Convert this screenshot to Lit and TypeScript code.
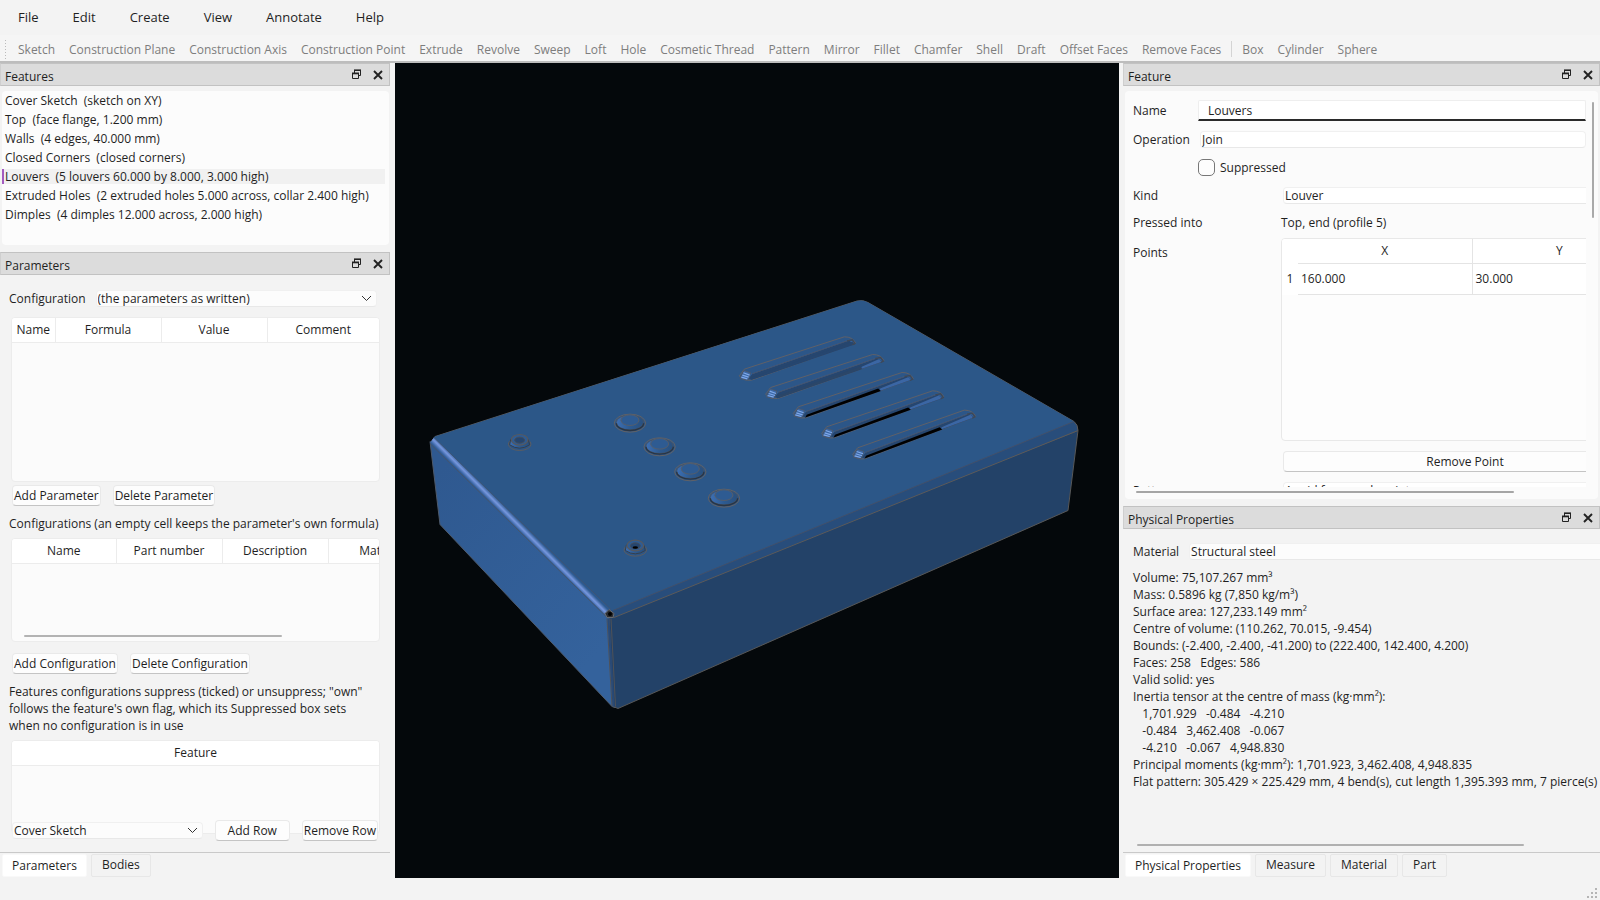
import { LitElement, html, svg, css, nothing } from "lit";
import { customElement, property } from "lit/decorators.js";

const MENUS = ["File", "Edit", "Create", "View", "Annotate", "Help"];

const TOOLS = [
  "Sketch", "Construction Plane", "Construction Axis", "Construction Point", "Extrude", "Revolve", "Sweep",
  "Loft", "Hole", "Cosmetic Thread", "Pattern", "Mirror", "Fillet", "Chamfer", "Shell", "Draft",
  "Offset Faces", "Remove Faces",
];
const SOLIDS = ["Box", "Cylinder", "Sphere"];

const FEATURES = [
  "Cover Sketch  (sketch on XY)",
  "Top  (face flange, 1.200 mm)",
  "Walls  (4 edges, 40.000 mm)",
  "Closed Corners  (closed corners)",
  "Louvers  (5 louvers 60.000 by 8.000, 3.000 high)",
  "Extruded Holes  (2 extruded holes 5.000 across, collar 2.400 high)",
  "Dimples  (4 dimples 12.000 across, 2.000 high)",
];

const PROPERTIES = [
  "Volume: 75,107.267 mm³",
  "Mass: 0.5896 kg (7,850 kg/m³)",
  "Surface area: 127,233.149 mm²",
  "Centre of volume: (110.262, 70.015, -9.454)",
  "Bounds: (-2.400, -2.400, -41.200) to (222.400, 142.400, 4.200)",
  "Faces: 258   Edges: 586",
  "Valid solid: yes",
  "Inertia tensor at the centre of mass (kg·mm²):",
  "   1,701.929   -0.484   -4.210",
  "   -0.484   3,462.408   -0.067",
  "   -4.210   -0.067   4,948.830",
  "Principal moments (kg·mm²): 1,701.923, 3,462.408, 4,948.835",
  "Flat pattern: 305.429 × 225.429 mm, 4 bend(s), cut length 1,395.393 mm, 7 pierce(s)",
].join("\n");

const controls = css`
  * {
    box-sizing: border-box;
  }
  button,
  input,
  select {
    font: inherit;
    color: inherit;
    margin: 0;
    border-radius: 4px;
  }
  button {
    height: 21px;
    padding: 0 1px;
    line-height: 17px;
    background: #fdfdfd;
    border: 1px solid #e9e9e9;
    border-bottom-color: #c4c4c4;
    white-space: nowrap;
  }
  select {
    appearance: none;
    height: 17px;
    padding: 0 1px;
    line-height: 15px;
    background: #fcfcfc;
    border: 1px solid #f0f0f0;
    border-bottom-color: #e8e8e8;
    min-width: 0;
  }
  .tabs {
    display: flex;
    gap: 4px;
    height: 26px;
    padding: 1px 3px 0 2px;
    border-top: 1px solid #c9c9c9;
    flex: none;
  }
  .tabs button {
    height: 23px;
    padding: 0 10px 2px;
    border: 1px solid #e7e7e7;
    border-radius: 2px;
    background: #f3f3f3;
  }
  .tabs button.on {
    padding: 0 9px;
    background: #fff;
    border-color: #f9f9f9;
  }
`;

@customElement("dock-panel")
export class DockPanel extends LitElement {
  @property() heading = "";

  static styles = css`
    :host {
      display: flex;
      flex-direction: column;
      min-height: 0;
      min-width: 0;
    }
    header {
      box-sizing: border-box;
      display: flex;
      align-items: center;
      flex: none;
      height: 23px;
      padding: 2px 0 0 4px;
      background: #dcdcdc;
      border: 1px solid #c2c2c2;
      border-left-color: #cfcfcf;
      line-height: 17px;
    }
    h2 {
      flex: 1;
      margin: 0;
      padding-top: 2px;
      font: inherit;
    }
    button {
      width: 22px;
      height: 20px;
      padding: 0 0 2px;
      border: 0;
      background: none;
      color: #222;
    }
    svg {
      display: block;
      margin: auto;
    }
  `;

  render() {
    return html`
      <header>
        <h2>${this.heading}</h2>
        <button aria-label="Float ${this.heading}">
          <svg width="11" height="11" viewBox="0 0 11 11" fill="none" stroke="currentColor">
            <path d="M3.5 4V1.5H9.5V6.5H8" /><path d="M3 1.2H10" stroke-width="1.6" />
            <path d="M1.5 4.5H7.5V9.5H1.5Z" /><path d="M1 4.4H8" stroke-width="1.8" />
          </svg>
        </button>
        <button aria-label="Close ${this.heading}">
          <svg width="10" height="10" viewBox="0 0 10 10" stroke="currentColor" stroke-width="1.9">
            <path d="M1 1L9 9M9 1L1 9" />
          </svg>
        </button>
      </header>
      <slot></slot>
    `;
  }
}

@customElement("model-view")
export class ModelView extends LitElement {
  static styles = css`
    :host {
      display: block;
      background: #04080b;
      min-width: 0;
      min-height: 0;
      overflow: hidden;
    }
    svg {
      display: block;
      width: 100%;
      height: 100%;
    }
  `;

  /** A louver between its left tip (lx, ly) and right tip (rx, ry); open is how far the dark slot runs. */
  private louver(lx: number, ly: number, rx: number, ry: number, open: number, slot: string) {
    const at = (t: number, dx: number, dy: number) =>
      `${lx + 36 + (rx - lx - 42) * t + dx},${ly + 12 + (ry - ly - 10) * t + dy}`;
    return svg`
      <path d="M${lx} ${ly + 2}L${lx + 15} ${ly - 18}L${rx - 34} ${ry - 20}Q${rx - 8} ${ry - 20} ${rx} ${ry - 1}L${lx + 36} ${ly + 15}Q${lx + 10} ${ly + 18} ${lx} ${ly + 2}Z"
        fill="#2c5688" stroke="#5f6067" stroke-width="3" />
      <path d="M${lx + 16} ${ly - 13}L${lx + 36} ${ly - 5}L${rx - 20} ${ry - 12}L${rx - 6} ${ry - 3}L${at(0, 0, 0)}L${lx + 6} ${ly + 4}Z" fill="#31609b" />
      <path d="M${at(0, -8, -2)}L${at(0, 2, -15)}L${at(1, -14, -11)}L${at(1, 2, 0)}L${at(0, 0, 2)}Z" fill="#26466f" />
      <path d="M${at(open, 0, 0)}L${at(open, 2, -7)}L${at(1, -10, -8)}L${at(1, 0, 0)}Z" fill="#3b66a4" />
      <path d="M${at(0, 0, 2)}L${at(0, 4, -6)}L${at(open, -4, -7)}L${at(open, 4, 0)}Z" fill="${slot}" />
      <path d="M${at(0, 2, -16)}L${at(1, -14, -12)}" fill="none" stroke="#46536a" stroke-width="3" />
      <path d="M${rx - 26} ${ry - 8}L${rx - 10} ${ry - 11}L${rx - 2} ${ry}L${rx - 10} ${ry + 4}" fill="none" stroke="#3d4858" stroke-width="4" />
      <path d="M${lx + 14} ${ly - 14}l20 7l-9 22l-23-5Z" fill="#3b68a6" stroke="#4d5768" stroke-width="2.5" />
      <path d="M${lx + 12} ${ly - 7}l19 7M${lx + 9} ${ly}l19 6M${lx + 6} ${ly + 6}l18 5" stroke="#80a9ea" stroke-width="3.5" />
    `;
  }

  private dimple(x: number, y: number) {
    return svg`
      <ellipse cx="${x}" cy="${y + 2}" rx="47" ry="27" fill="#2c5688" stroke="#616165" stroke-width="3" />
      <ellipse cx="${x}" cy="${y}" rx="41" ry="22" fill="url(#dome)" stroke="#465365" stroke-width="2.5" />
      <path d="M${x - 41} ${y + 2}A41 22 0 0 0 ${x + 41} ${y + 2}" fill="none" stroke="#2b3542" stroke-width="4" />
      <ellipse cx="${x}" cy="${y - 7}" rx="27" ry="16" fill="#2e5b92" stroke="#545d6b" stroke-width="3" />
    `;
  }

  private collar(x: number, y: number, through: boolean) {
    return svg`
      <ellipse cx="${x}" cy="${y + 6}" rx="34" ry="19" fill="#2c5688" stroke="#5b5c60" stroke-width="3" />
      <path d="M${x - 27} ${y - 8}L${x - 30} ${y + 8}Q${x} ${y + 28} ${x + 30} ${y + 8}L${x + 26} ${y - 8}Z" fill="url(#dome)" stroke="#343f4d" stroke-width="3" />
      <ellipse cx="${x}" cy="${y - 7}" rx="25" ry="16" fill="#2f5c93" stroke="#56595f" stroke-width="3.5" />
      <ellipse cx="${x}" cy="${y - 6}" rx="15" ry="9" fill="#26466f" stroke="#434c5a" stroke-width="3" />
      ${through ? svg`<ellipse cx="${x}" cy="${y - 1}" rx="8" ry="4" fill="#000" />` : nothing}
    `;
  }

  render() {
    return html`
      <svg viewBox="395 63 724 814" role="img" aria-label="Sheet metal cover">
        <defs>
          <linearGradient id="side" x1="430" y1="480" x2="610" y2="640" gradientUnits="userSpaceOnUse">
            <stop offset="0" stop-color="#2f5990" /><stop offset="1" stop-color="#34629c" />
          </linearGradient>
          <linearGradient id="bend" x1="518" y1="529" x2="523" y2="524" gradientUnits="userSpaceOnUse">
            <stop offset="0" stop-color="#335f9b" /><stop offset="0.5" stop-color="#7898e0" />
            <stop offset="1" stop-color="#2d5a90" />
          </linearGradient>
          <linearGradient id="dome">
            <stop offset="0" stop-color="#3d70b6" /><stop offset="0.5" stop-color="#2d5a90" />
            <stop offset="1" stop-color="#28507f" />
          </linearGradient>
        </defs>
        <g stroke-linejoin="round">
          <path d="M430 441L440 524L612 706L615 707V620L607 614Z" fill="url(#side)" stroke="#4e5a6b" />
          <path d="M612 614L1078 430L1068 510L618 708L613 706L609 617Z" fill="#234268" stroke="#575757" />
          <path d="M432 440L435 436L857 300.500Q863 299 868 302L1074 421Q1078 424 1078 430L614 617L606 613Z" fill="#284d7b" stroke="#5c5a59" />
          <path d="M433 438L435 436L857 300.500Q863 299 868 302L1074 421L613 610L609 610Z" fill="#2c5788" />
          <path d="M613 610L1074 421" stroke="#42506a" fill="none" />
          <path d="M430 442L434 437L611 609L606 615Z" fill="url(#bend)" />
          <path d="M434 437L611 609" stroke="#3e5474" />
          <path d="M430 443L606 616" stroke="#46566e" />
          <path d="M607 618L612 706M611 618L615.500 706" stroke="#505257" fill="none" />
          <path d="M608.500 618L613.500 706" stroke="#2a4a76" stroke-width="2" />
          <path d="M605 613L609 609L614 613L613 617H607Z" fill="#2b2d31" stroke="#666a70" />
          <circle cx="610" cy="613.500" r="2" fill="#000" />
        </g>
        <g transform="translate(720 290) scale(0.3333)">
          ${this.louver(58, 254, 407, 159, 1, "#26466f")}
          ${this.louver(137, 309, 492, 212, 0.8, "#2b4668")}
          ${this.louver(220, 367, 580, 266, 0.7, "#000")}
          ${this.louver(305, 427, 672, 321, 0.7, "#000")}
          ${this.louver(398, 490, 767, 379, 0.7, "#000")}
        </g>
        <g transform="translate(420 390) scale(0.3333)">
          ${this.dimple(630, 96)} ${this.dimple(719, 167)} ${this.dimple(811, 242)} ${this.dimple(912, 321)}
          ${this.collar(299, 155, false)} ${this.collar(646, 472, true)}
        </g>
      </svg>
    `;
  }
}

@customElement("parameters-pane")
export class ParametersPane extends LitElement {
  static styles = [
    controls,
    css`
      :host {
        display: flex;
        flex-direction: column;
        flex: 1;
        min-height: 0;
        line-height: 17px;
      }
      .body {
        display: flex;
        flex-direction: column;
        flex: 1;
        min-height: 0;
        padding: 15px 10px 11px 9px;
      }
      .config {
        display: flex;
        gap: 10px;
        align-items: center;
        padding-right: 3px;
        margin-bottom: 10px;
      }
      .pick {
        display: flex;
        position: relative;
        flex: 1;
      }
      .pick select {
        flex: 1;
      }
      .pick svg {
        position: absolute;
        right: 5px;
        top: 5px;
        pointer-events: none;
      }
      .grid {
        margin-left: 2px;
        border: 1px solid #ececec;
        border-radius: 4px;
        background: #fbfbfb;
        overflow: hidden;
        flex: none;
        display: flex;
        flex-direction: column;
      }
      .grid.params {
        flex: 1;
      }
      .grid.configs {
        height: 104px;
        margin-top: 6px;
      }
      .grid.flags {
        height: 94px;
        margin-top: 6px;
      }
      table {
        border-collapse: collapse;
        table-layout: fixed;
        width: 100%;
        background: #fff;
      }
      .configs table {
        width: 424px;
      }
      th {
        font-weight: normal;
        padding: 0;
        height: 24px;
        border-right: 1px solid #ececec;
        border-bottom: 1px solid #ececec;
      }
      th:last-child {
        border-right: 0;
      }
      .name {
        width: 43px;
      }
      .first {
        width: 104px;
      }
      .mid {
        width: 106px;
      }
      .bar {
        width: 258px;
        height: 2px;
        margin: auto 0 4px 12px;
        border-radius: 1px;
        background: #b3b3b3;
      }
      .buttons {
        display: flex;
        gap: 12px;
        padding-left: 3px;
        margin: 3px 0 9px;
      }
      .buttons.low {
        margin-top: 11px;
      }
      p {
        margin: 0;
        white-space: nowrap;
      }
      p.wrap {
        white-space: normal;
      }
      .rows {
        display: flex;
        gap: 12px;
        align-items: center;
        padding: 0 2px 0 3px;
        margin-top: -14px;
        position: relative;
      }
      .rows .add {
        width: 75px;
      }
    `,
  ];

  private chevron() {
    return html`<svg width="11" height="7" viewBox="0 0 11 7" fill="none" stroke="#333"><path d="M1 1L5.500 5.500L10 1" /></svg>`;
  }

  render() {
    return html`
      <div class="body">
        <div class="config">
          <label for="config">Configuration</label>
          <span class="pick">
            <select id="config"><option>(the parameters as written)</option></select>${this.chevron()}
          </span>
        </div>
        <div class="grid params">
          <table>
            <tr><th class="name">Name</th><th class="mid">Formula</th><th class="mid">Value</th><th>Comment</th></tr>
          </table>
        </div>
        <div class="buttons"><button>Add Parameter</button><button>Delete Parameter</button></div>
        <p>Configurations (an empty cell keeps the parameter's own formula)</p>
        <div class="grid configs">
          <table>
            <tr><th class="first">Name</th><th class="mid">Part number</th><th class="mid">Description</th><th>Material</th></tr>
          </table>
          <div class="bar"></div>
        </div>
        <div class="buttons low"><button>Add Configuration</button><button>Delete Configuration</button></div>
        <p class="wrap">
          Features configurations suppress (ticked) or unsuppress; "own" follows the feature's own flag, which its
          Suppressed box sets when no configuration is in use
        </p>
        <div class="grid flags">
          <table><tr><th>Feature</th></tr></table>
        </div>
        <div class="rows">
          <span class="pick">
            <select aria-label="Feature to add"><option>Cover Sketch</option></select>${this.chevron()}
          </span>
          <button class="add">Add Row</button><button>Remove Row</button>
        </div>
      </div>
      <nav class="tabs"><button class="on">Parameters</button><button>Bodies</button></nav>
    `;
  }
}

@customElement("feature-pane")
export class FeaturePane extends LitElement {
  static styles = [
    controls,
    css`
      :host {
        display: flex;
        flex: 1;
        min-height: 0;
        line-height: 17px;
        padding: 5px 2px 7px;
      }
      .frame {
        flex: 1;
        min-width: 0;
        display: grid;
        grid-template-columns: minmax(0, 1fr) 12px;
        grid-template-rows: minmax(0, 1fr) 12px;
        padding: 9px 0 0 8px;
        background: #fbfbfb;
        border-radius: 4px;
      }
      form {
        overflow: hidden;
        display: flex;
        flex-direction: column;
        gap: 10px;
      }
      .row {
        display: grid;
        grid-template-columns: 56px 1fr;
        column-gap: 9px;
        align-items: center;
        flex: none;
      }
      .row.wide {
        grid-template-columns: 140px 366px;
        column-gap: 8px;
      }
      .group {
        display: flex;
        flex-direction: column;
        gap: 7px;
        flex: none;
      }
      .name {
        height: 21px;
        width: 100%;
        padding: 0 9px;
        border: 1px solid #eee;
        border-bottom: 2px solid #2a2a2a;
        border-radius: 2px 2px 0 0;
        background: #fff;
        outline: 0;
      }
      select {
        background: #fff;
        margin-left: 2px;
      }
      .check {
        grid-column: 2;
        display: flex;
        gap: 5px;
        align-items: center;
        height: 19px;
      }
      .check input {
        appearance: none;
        width: 17px;
        height: 17px;
        border: 1px solid #777;
        border-radius: 5px;
        background: #fdfdfd;
      }
      .top {
        align-self: start;
        padding-top: 6px;
      }
      .points {
        height: 203px;
        border: 1px solid #e8e8e8;
        border-radius: 4px;
        background: #fdfdfd;
        overflow: hidden;
      }
      table {
        border-collapse: collapse;
        table-layout: fixed;
        width: 100%;
        background: #fff;
      }
      th,
      td {
        padding: 0 3px;
        font-weight: normal;
        border-bottom: 1px solid #e4e4e4;
      }
      tr > :nth-child(2) {
        border-right: 1px solid #e4e4e4;
      }
      tr > :first-child {
        border-bottom: 0;
        width: 16px;
      }
      thead th {
        height: 24px;
      }
      tbody tr > * {
        height: 31px;
      }
      .col {
        width: 174px;
      }
      .second {
        grid-column: 2;
        margin-left: 2px;
      }
      .v {
        width: 2px;
        height: 116px;
        margin: 2px 0 0 6px;
        border-radius: 1px;
        background: #a9a9a9;
      }
      .h {
        width: 378px;
        height: 2px;
        margin: 4px 0 0 3px;
        border-radius: 1px;
        background: #a5a5a5;
      }
    `,
  ];

  render() {
    return html`
      <div class="frame">
        <form>
          <div class="row"><label for="name">Name</label><input id="name" class="name" value="Louvers" /></div>
          <div class="row">
            <label for="op">Operation</label><select id="op"><option>Join</option></select>
          </div>
          <div class="row">
            <label class="check"><input type="checkbox" />Suppressed</label>
          </div>
          <div class="row wide">
            <label for="kind">Kind</label><select id="kind"><option>Louver</option></select>
          </div>
          <div class="group">
            <div class="row wide"><span>Pressed into</span><span>Top, end (profile 5)</span></div>
            <div class="row wide">
              <span class="top">Points</span>
              <div class="points">
                <table>
                  <thead><tr><th></th><th class="col">X</th><th>Y</th></tr></thead>
                  <tbody><tr><th>1</th><td>160.000</td><td>30.000</td></tr></tbody>
                </table>
              </div>
            </div>
          </div>
          <div class="row wide"><button type="button" class="second">Remove Point</button></div>
          <div class="row wide">
            <label for="pattern">Pattern</label><select id="pattern"><option>A grid from each point</option></select>
          </div>
        </form>
        <div class="v"></div>
        <div class="h"></div>
      </div>
    `;
  }
}

@customElement("properties-pane")
export class PropertiesPane extends LitElement {
  static styles = [
    controls,
    css`
      :host {
        display: flex;
        flex-direction: column;
        flex: 1;
        min-height: 0;
        line-height: 17px;
      }
      .body {
        display: flex;
        flex-direction: column;
        flex: 1;
        min-height: 0;
        padding: 14px 0 6px 10px;
        overflow: hidden;
      }
      .material {
        display: flex;
        gap: 10px;
        margin-bottom: 9px;
      }
      select {
        flex: 1;
        border-radius: 4px 0 0 4px;
        border-right: 0;
      }
      output {
        white-space: pre;
      }
      .bar {
        width: 387px;
        height: 2px;
        margin: auto 0 0 4px;
        flex: none;
        border-radius: 1px;
        background: #b0b0b0;
      }
    `,
  ];

  render() {
    return html`
      <div class="body">
        <div class="material">
          <label for="material">Material</label>
          <select id="material"><option>Structural steel</option></select>
        </div>
        <output>${PROPERTIES}</output>
        <div class="bar"></div>
      </div>
      <nav class="tabs">
        <button class="on">Physical Properties</button><button>Measure</button><button>Material</button
        ><button>Part</button>
      </nav>
    `;
  }
}

@customElement("app-root")
export class AppRoot extends LitElement {
  static styles = css`
    :host {
      display: grid;
      grid-template-rows: 35px 28px minmax(0, 1fr) 22px;
      height: 100vh;
      min-height: 700px;
      overflow: hidden;
      background: #f3f3f3;
      color: #1f1f1f;
      font: 12px "Open Sans", sans-serif;
    }
    * {
      box-sizing: border-box;
    }
    .menus {
      display: flex;
      align-items: center;
      padding: 0 0 2px 8px;
      gap: 14px;
      font-size: 13px;
    }
    .menus button,
    .tools button {
      padding: 0;
      border: 0;
      background: none;
      font: inherit;
      color: inherit;
      white-space: nowrap;
    }
    .menus button {
      padding: 0 10px;
    }
    .tools {
      display: flex;
      align-items: center;
      gap: 14px;
      padding: 2px 0 0 4px;
      background: #f5f5f5;
      border-bottom: 2px solid #bdbdbd;
      color: #7d7d7d;
    }
    .grip {
      width: 3px;
      height: 20px;
      margin-right: -3px;
      background: radial-gradient(#bbb 1px, transparent 1px) 0 0 / 3px 3px;
    }
    .rule {
      width: 1px;
      height: 16px;
      margin: 0 -4px;
      background: #d4d4d4;
    }
    main {
      display: grid;
      grid-template-columns: 390px minmax(0, 1fr) 477px;
      column-gap: 4px;
      min-height: 0;
    }
    .left {
      display: grid;
      grid-template-rows: auto minmax(0, 1fr);
      row-gap: 7px;
      min-height: 0;
    }
    .right {
      display: grid;
      grid-template-rows: minmax(0, 443fr) minmax(0, 372fr);
      min-height: 0;
    }
    model-view {
      margin-left: 1px;
    }
    ul {
      margin: 5px 1px 0 2px;
      padding: 0 4px 8px 0;
      min-height: 154px;
      list-style: none;
      background: #fcfcfc;
      border-radius: 4px;
    }
    li {
      padding-left: 3px;
      height: 19px;
      line-height: 15px;
      white-space: pre;
      border: solid transparent;
      border-width: 2px 0;
      background-clip: padding-box;
    }
    li.on {
      background-color: #f1f1f1;
      position: relative;
    }
    li.on::before {
      content: "";
      position: absolute;
      inset: 0 auto 0 0;
      width: 2px;
      background: #a45cc0;
    }
    .status {
      display: flex;
      justify-content: flex-end;
      align-items: flex-end;
      padding: 0 2px 1px;
    }
  `;

  render() {
    return html`
      <nav class="menus">${MENUS.map((m) => html`<button>${m}</button>`)}</nav>
      <nav class="tools">
        <span class="grip"></span>
        ${TOOLS.map((t) => html`<button>${t}</button>`)}
        <span class="rule"></span>
        ${SOLIDS.map((t) => html`<button>${t}</button>`)}
      </nav>
      <main>
        <div class="left">
          <dock-panel heading="Features">
            <ul>
              ${FEATURES.map((f, i) => html`<li class=${i === 4 ? "on" : ""}>${f}</li>`)}
            </ul>
          </dock-panel>
          <dock-panel heading="Parameters"><parameters-pane></parameters-pane></dock-panel>
        </div>
        <model-view></model-view>
        <div class="right">
          <dock-panel heading="Feature"><feature-pane></feature-pane></dock-panel>
          <dock-panel heading="Physical Properties"><properties-pane></properties-pane></dock-panel>
        </div>
      </main>
      <footer class="status">
        <svg width="11" height="11" viewBox="0 0 11 11" fill="#b5b5b5">
          <path d="M8 0h2v2h-2zM8 4h2v2h-2zM4 4h2v2h-2zM8 8h2v2h-2zM4 8h2v2h-2zM0 8h2v2h-2z" />
        </svg>
      </footer>
    `;
  }
}
